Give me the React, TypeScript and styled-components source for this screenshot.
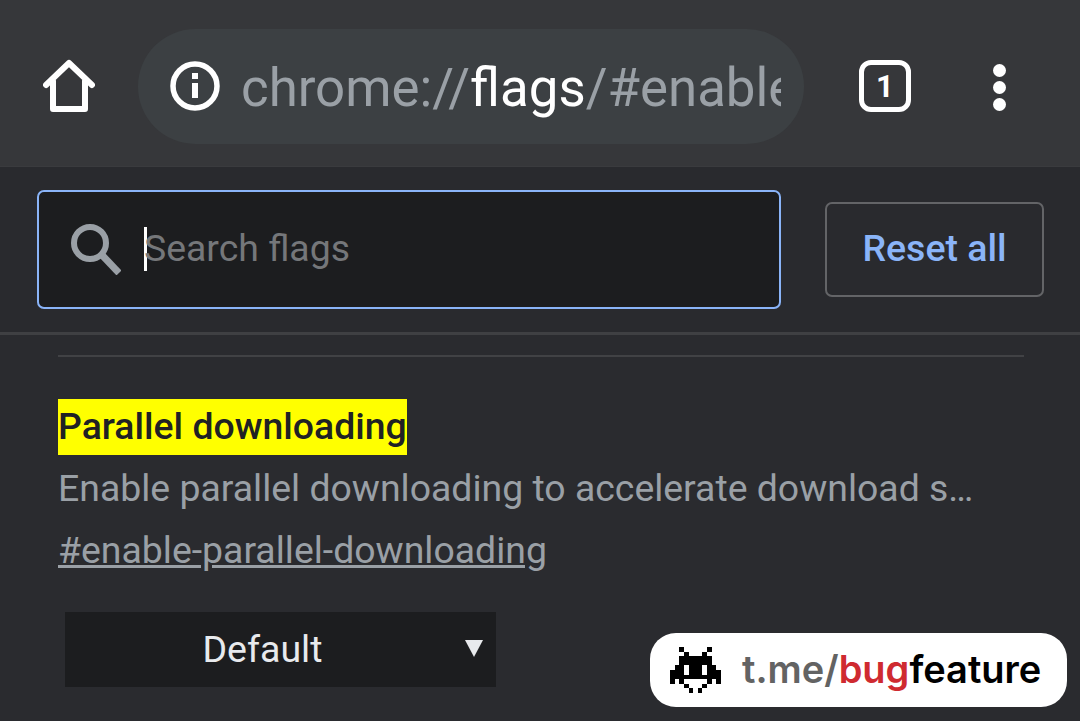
import React from 'react';
import styled, { createGlobalStyle } from 'styled-components';

const GlobalStyle = createGlobalStyle`
  html, body {
    margin: 0;
    padding: 0;
    background: #2a2b2f;
    font-family: Roboto, "Liberation Sans", sans-serif;
  }
`;

const Page = styled.div`
  position: relative;
  width: 1080px;
  height: 721px;
  overflow: hidden;
  background: #2a2b2f;
`;

const Toolbar = styled.header`
  display: flex;
  align-items: center;
  box-sizing: border-box;
  height: 167px;
  padding: 29px 0 23px 43px;
  background: #36373a;
  border-bottom: 1px solid #3a3b3e;
`;

const ToolIcon = styled.svg`
  flex: none;
  display: block;
`;

const Omnibox = styled.div`
  display: flex;
  align-items: center;
  box-sizing: border-box;
  width: 666px;
  height: 115px;
  margin-left: 43px;
  margin-right: 55px;
  padding: 0 23px 0 32px;
  border-radius: 58px;
  background: #3c4043;
`;

const Url = styled.div`
  flex: 1;
  min-width: 0;
  margin: 4px 0 0 21px;
  overflow: hidden;
  white-space: nowrap;
  font-size: 52.8px;
  line-height: 62px;
  color: #9aa0a6;
`;

const UrlStrong = styled.span`
  color: #ffffff;
`;

const TabBadge = styled.div`
  flex: none;
  display: flex;
  align-items: center;
  justify-content: center;
  box-sizing: border-box;
  width: 52px;
  height: 52px;
  border: 5px solid #ffffff;
  border-radius: 12px;
  font-size: 31px;
  font-weight: 700;
  color: #ffffff;
`;

const MenuDots = styled.div`
  flex: none;
  display: flex;
  flex-direction: column;
  gap: 4px;
  margin: 2px 0 0 82px;
`;

const Dot = styled.span`
  display: block;
  width: 13px;
  height: 13px;
  border-radius: 50%;
  background: #ffffff;
`;

const SearchBar = styled.section`
  display: flex;
  align-items: center;
  box-sizing: border-box;
  height: 168px;
  padding: 0 36px 1px 37px;
  background: #292a2e;
  border-bottom: 3px solid #3f4043;
`;

const SearchBox = styled.div`
  display: flex;
  align-items: center;
  box-sizing: border-box;
  width: 744px;
  height: 119px;
  padding-left: 32px;
  border: 2px solid #8ab4f8;
  border-radius: 7px;
  background: #1c1d1f;
`;

const Caret = styled.span`
  display: block;
  width: 3px;
  height: 44px;
  margin-left: 23px;
  background: #ffffff;
`;

const Placeholder = styled.span`
  margin: 0 0 2px -3px;
  font-size: 37.4px;
  line-height: 44px;
  color: #75777a;
`;

const ResetButton = styled.button`
  box-sizing: border-box;
  width: 219px;
  height: 95px;
  margin-left: auto;
  padding: 0 0 2px;
  border: 2px solid #636467;
  border-radius: 7px;
  background: transparent;
  font-family: inherit;
  font-size: 37.5px;
  font-weight: 500;
  color: #8ab4f8;
`;

const FlagList = styled.main`
  padding: 20px 56px 0 58px;
`;

const Divider = styled.hr`
  height: 2px;
  margin: 0;
  border: 0;
  background: #414245;
`;

const FlagTitle = styled.h2`
  display: inline-block;
  margin: 42px 0 0;
  padding: 0 0 2px;
  font-size: 37.4px;
  font-weight: 500;
  line-height: 54px;
  background: #ffff00;
  color: #202124;
`;

const FlagDescription = styled.p`
  width: 925px;
  margin: 5px 0 0;
  overflow: hidden;
  white-space: nowrap;
  text-overflow: ellipsis;
  font-size: 37.4px;
  line-height: 57px;
  color: #9aa0a6;
`;

const FlagLink = styled.a`
  display: block;
  margin-top: 5px;
  font-size: 37.4px;
  line-height: 57px;
  color: #9aa0a6;
  text-decoration: underline;
`;

const FlagSelect = styled.div`
  display: flex;
  align-items: center;
  justify-content: center;
  position: relative;
  box-sizing: border-box;
  width: 431px;
  height: 75px;
  margin: 33px 0 0 7px;
  padding: 0 36px 2px 0;
  background: #1c1d1f;
  font-size: 37.5px;
  color: #e8eaed;
`;

const SelectArrow = styled.span`
  position: absolute;
  right: 13px;
  top: 28px;
  width: 0;
  height: 0;
  border-left: 9px solid transparent;
  border-right: 9px solid transparent;
  border-top: 17px solid #e8eaed;
`;

const Watermark = styled.div`
  position: absolute;
  left: 650px;
  top: 633px;
  display: flex;
  align-items: center;
  box-sizing: border-box;
  width: 417px;
  height: 74px;
  padding-left: 20px;
  border-radius: 26px;
  background: #ffffff;
  font-family: Inter, "Open Sans", sans-serif;
  font-size: 38px;
  font-weight: 600;
  color: #000000;
`;

const WatermarkText = styled.span`
  margin: 0 0 2px 21px;
  white-space: nowrap;
`;

const Grey = styled.span`
  color: #636363;
`;

const Red = styled.span`
  color: #cf2a30;
`;

const invaderRows = [
  '..#.....#..',
  '...#...#...',
  '..#######..',
  '..#######..',
  '.##.###.##.',
  '###.###.###',
  '###########',
  '#.#.....#.#',
  '...#...#...',
  '....#.#....',
];

function Invader() {
  return (
    <ToolIcon width="51" height="46" viewBox="0 0 11 10" shapeRendering="crispEdges">
      {invaderRows.flatMap((row, y) =>
        row.split('').map((c, x) => (c === '#' ? <rect key={`${x}-${y}`} x={x} y={y} width="1" height="1" fill="#000" /> : null)),
      )}
    </ToolIcon>
  );
}

export default function App() {
  return (
    <Page>
      <GlobalStyle />
      <Toolbar>
        <ToolIcon width="52" height="54" viewBox="0 0 52 54" fill="none" stroke="#fff" strokeWidth="6" strokeLinejoin="round" strokeLinecap="round">
          <path d="M3 26 L26 4 L49 26 M10 22 V50 H42 V22" />
        </ToolIcon>
        <Omnibox>
          <ToolIcon width="50" height="50" viewBox="0 0 50 50" fill="none">
            <circle cx="25" cy="25" r="22" stroke="#fff" strokeWidth="5.5" />
            <rect x="22" y="22" width="6" height="15" fill="#fff" />
            <rect x="22" y="12" width="6" height="6" fill="#fff" />
          </ToolIcon>
          <Url>
            chrome://<UrlStrong>flags</UrlStrong>/#enable-parallel-downloading
          </Url>
        </Omnibox>
        <TabBadge>1</TabBadge>
        <MenuDots>
          <Dot />
          <Dot />
          <Dot />
        </MenuDots>
      </Toolbar>
      <SearchBar>
        <SearchBox>
          <ToolIcon width="50" height="52" viewBox="0 0 50 52" fill="none" stroke="#9aa0a6" strokeWidth="6">
            <circle cx="19" cy="20" r="16" />
            <path d="M31 32 L48 50" strokeWidth="7" />
          </ToolIcon>
          <Caret />
          <Placeholder>Search flags</Placeholder>
        </SearchBox>
        <ResetButton>Reset all</ResetButton>
      </SearchBar>
      <FlagList>
        <Divider />
        <FlagTitle>Parallel downloading</FlagTitle>
        <FlagDescription>Enable parallel downloading to accelerate download speed.</FlagDescription>
        <FlagLink>#enable-parallel-downloading</FlagLink>
        <FlagSelect>
          Default
          <SelectArrow />
        </FlagSelect>
      </FlagList>
      <Watermark>
        <Invader />
        <WatermarkText>
          <Grey>t.me/</Grey>
          <Red>bug</Red>feature
        </WatermarkText>
      </Watermark>
    </Page>
  );
}
